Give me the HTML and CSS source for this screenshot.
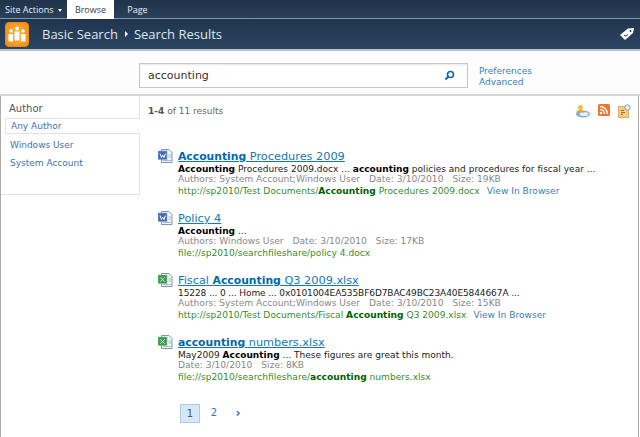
FILE: index.html
```html
<!DOCTYPE html>
<html lang="en">
<head>
<meta charset="utf-8">
<title>Search Results</title>
<link rel="stylesheet" href="styles.css">
</head>
<body>
<div class="ribbon">
  <div class="site-actions">Site Actions <span class="caret"></span></div>
  <div class="tab tab-active">Browse</div>
  <div class="tab">Page</div>
</div>
<div class="titlebar">
  <svg class="logo" width="24" height="25" viewBox="0 0 24 25"><defs><radialGradient id="lg" cx="0.5" cy="0.5" r="0.7"><stop offset="0" stop-color="#ffb43a"/><stop offset="1" stop-color="#f08a12"/></radialGradient></defs><rect x="0.500" y="0.500" width="23" height="24" rx="3.500" fill="url(#lg)" stroke="#e88a1a"/><circle cx="12" cy="6.500" r="2" fill="#fff"/><circle cx="6" cy="9" r="1.700" fill="#fff"/><circle cx="18" cy="9" r="1.700" fill="#fff"/><rect x="9.500" y="9.500" width="5" height="9" fill="#fff"/><rect x="3.500" y="12" width="4.500" height="7.500" fill="#fff"/><rect x="16" y="12" width="4.500" height="7.500" fill="#fff"/></svg>
  <div class="crumb">Basic Search</div>
  <span class="crumb-arrow"></span>
  <div class="crumb">Search Results</div>
  <svg class="tag" width="16" height="14" viewBox="0 0 16 14"><path d="M1 8 L9 1.500 L15 1 L14 6 L6 13 Z" fill="#fff"/><circle cx="11.500" cy="4" r="1" fill="#2a4059"/><path d="M5 8.500 Q7 10 9 7.500" stroke="#2a4059" fill="none"/></svg>
</div>
<div class="searchbar">
  <div class="searchbox">
    <span class="query">accounting</span>
    <svg width="11" height="11" viewBox="0 0 11 11"><circle cx="6.500" cy="4.500" r="3" fill="none" stroke="#1b5f9e" stroke-width="1.600"/><path d="M4.500 6.500 L1.500 9.500" stroke="#1b5f9e" stroke-width="2"/></svg>
  </div>
  <div class="search-links"><a>Preferences</a><a>Advanced</a></div>
</div>
<div class="main">
  <aside class="refine">
    <div class="refine-title">Author</div>
    <div class="refine-item refine-selected">Any Author</div>
    <div class="refine-item">Windows User</div>
    <div class="refine-item">System Account</div>
  </aside>
  <section class="content">
    <div class="topline">
      <div class="count"><b>1-4</b> of 11 results</div>
      <div class="actions">
        <svg width="15" height="14" viewBox="0 0 15 14"><ellipse cx="8" cy="10" rx="7" ry="3.500" fill="#7fa9dc"/><ellipse cx="9" cy="10" rx="4.500" ry="2" fill="#e6f0fb"/><circle cx="5.500" cy="3.500" r="2.500" fill="#e8c04a"/><path d="M0.500 8.500 Q5 3 10 8.500 Z" fill="#d9a93a"/></svg>
        <svg width="12" height="12" viewBox="0 0 12 12"><rect width="12" height="12" rx="1.500" fill="#f0742a"/><circle cx="3" cy="9" r="1.300" fill="#fff"/><path d="M2 5.500 A4.500 4.500 0 0 1 6.500 10 M2 2.500 A7.500 7.500 0 0 1 9.500 10" fill="none" stroke="#fff" stroke-width="1.400"/></svg>
        <svg width="13" height="14" viewBox="0 0 13 14"><rect x="0.500" y="2.500" width="10" height="11" fill="#f4cf83" stroke="#e0ad68"/><path d="M3 6.500 H6 M3 8.500 H7 M3 10.500 H5" stroke="#a8682a"/><circle cx="9.500" cy="3.500" r="2.700" fill="#e4eef8" stroke="#8a9bb0"/></svg>
      </div>
    </div>
    <article class="result">
      <svg class="doc" width="15" height="14" viewBox="0 0 15 14"><use href="#word"/></svg>
      <div>
        <a class="r-title"><b>Accounting</b> Procedures 2009</a>
        <div class="r-snippet"><b>Accounting</b> Procedures 2009.docx ... <b>accounting</b> policies and procedures for fiscal year ...</div>
        <div class="r-meta"><span>Authors: System Account;Windows User</span><span>Date: 3/10/2010</span><span>Size: 19KB</span></div>
        <div class="r-url">http://sp2010/Test Documents/<b>Accounting</b> Procedures 2009.docx<a class="view">View In Browser</a></div>
      </div>
    </article>
    <article class="result">
      <svg class="doc" width="15" height="14" viewBox="0 0 15 14"><use href="#word"/></svg>
      <div>
        <a class="r-title">Policy 4</a>
        <div class="r-snippet"><b>Accounting</b> ...</div>
        <div class="r-meta"><span>Authors: Windows User</span><span>Date: 3/10/2010</span><span>Size: 17KB</span></div>
        <div class="r-url">file://sp2010/searchfileshare/policy 4.docx</div>
      </div>
    </article>
    <article class="result">
      <svg class="doc" width="15" height="14" viewBox="0 0 15 14"><use href="#excel"/></svg>
      <div>
        <a class="r-title">Fiscal <b>Accounting</b> Q3 2009.xlsx</a>
        <div class="r-snippet r-snippet-tight">15228 ... 0 ... Home ... 0x0101004EA535BF6D7BAC49BC23A40E5844667A ...</div>
        <div class="r-meta"><span>Authors: System Account;Windows User</span><span>Date: 3/10/2010</span><span>Size: 15KB</span></div>
        <div class="r-url">http://sp2010/Test Documents/Fiscal <b>Accounting</b> Q3 2009.xlsx<a class="view">View In Browser</a></div>
      </div>
    </article>
    <article class="result">
      <svg class="doc" width="15" height="14" viewBox="0 0 15 14"><use href="#excel"/></svg>
      <div>
        <a class="r-title"><b>accounting</b> numbers.xlsx</a>
        <div class="r-snippet">May2009 <b>Accounting</b> ... These figures are great this month.</div>
        <div class="r-meta"><span>Date: 3/10/2010</span><span>Size: 8KB</span></div>
        <div class="r-url">file://sp2010/searchfileshare/<b>accounting</b> numbers.xlsx</div>
      </div>
    </article>
    <nav class="pager">
      <span class="page page-current">1</span>
      <span class="page">2</span>
      <span class="page next">›</span>
    </nav>
  </section>
</div>
<svg class="defs" width="0" height="0">
  <defs>
    <g id="word"><path d="M3.500 .5 H11 L14 3.500 V13.500 H3.500 Z" fill="#f2f5fa" stroke="#7f93b5"/><rect x="0" y="2" width="9" height="8.500" fill="#3f6cb5" stroke="#8fa8d0" stroke-width=".6"/><path d="M2 4.500 L3.500 8.500 L4.700 6 L6 8.500 L7.500 4.500" stroke="#fff" fill="none"/><path d="M10.500 6 H13 M10.500 8 H13 M5 11.500 H13" stroke="#a9b8d0"/></g>
    <g id="excel"><path d="M3.500 .5 H11 L14 3.500 V13.500 H3.500 Z" fill="#f2f6f4" stroke="#7f96a8"/><rect x="0" y="2" width="9" height="8.500" fill="#3a9c52" stroke="#8cc49c" stroke-width=".6"/><path d="M2.500 4.500 L6.500 8.500 M6.500 4.500 L2.500 8.500" stroke="#fff"/><path d="M10.500 6 H13 M10.500 8 H13 M5 11.500 H13" stroke="#a9bcc4"/></g>
  </defs>
</svg>
</body>
</html>
```
FILE: styles.css
```css
* { box-sizing: border-box; }
html, body { margin: 0; padding: 0; }
body {
  width: 640px;
  height: 437px;
  overflow: hidden;
  background: #fff;
  font-family: "DejaVu Sans", Verdana, sans-serif;
  font-size: 9px;
  color: #333;
  position: relative;
}
.defs { position: absolute; }
.ribbon {
  height: 19px;
  background: linear-gradient(#1f3349, #2a4059);
  border-bottom: 1px solid #7f97a8;
  display: flex;
  color: #e8edf2;
  font-family: "Open Sans", sans-serif;
  font-size: 9px;
  line-height: 19px;
}
.site-actions { width: 67px; padding-left: 5px; white-space: nowrap; }
.caret {
  display: inline-block;
  border: 2.5px solid transparent;
  border-top: 3px solid #fff;
  border-bottom: 0;
  margin-left: 2px;
  vertical-align: 1px;
}
.tab { width: 47px; text-align: center; }
.tab-active { background: #fff; color: #3b3b3b; height: 19px; }
.titlebar {
  height: 32px;
  background: linear-gradient(#203650, #2b4560);
  border-bottom: 2px solid #b8c4cc;
  display: flex;
  align-items: center;
  color: #dfe6ee;
  font-family: "Open Sans", sans-serif;
  font-size: 13px;
  padding-left: 5px;
}
.logo { margin-right: 13px; }
.crumb { white-space: nowrap; }
.crumb-arrow {
  border: 3px solid transparent;
  border-left: 3px solid #fff;
  border-right: 0;
  margin: 0 6px 0 7px;
}
.tag { margin-left: auto; margin-right: 5px; }
.searchbar {
  height: 45px;
  display: flex;
  align-items: flex-start;
  border-bottom: 2px solid #d6d6d6;
  padding: 12px 0 0 139px;
  background: #fdfdfd;
}
.searchbox {
  width: 329px;
  height: 25px;
  border: 1px solid #c4c8cc;
  box-shadow: inset 0 1px 2px #e8e8e8;
  background: #fff;
  display: flex;
  align-items: center;
  justify-content: space-between;
  padding: 0 12px 0 8px;
}
.query { font-size: 11px; color: #333; }
.search-links {
  margin: 3px 0 0 11px;
  display: flex;
  flex-direction: column;
  color: #3b80b8;
  line-height: 10.5px;
}
.main { display: flex; height: 341px; border-left: 1px solid #aaa; }
.refine {
  width: 139px;
  height: 99px;
  border: 1px solid #e2e2e2;
  border-width: 0 1px 1px 0;
  color: #3b73af;
}
.refine-title { color: #555; font-size: 10px; height: 22px; padding: 6px 0 0 8px; line-height: 14px; }
.refine-item { height: 18px; line-height: 16px; padding-left: 9px; }
.refine-selected {
  height: 16px;
  margin: 0 -1px 3px 4px;
  padding-left: 5px;
  line-height: 14px;
  border: 1px solid #e2e2e2;
  border-right: 0;
  background: #fff;
  position: relative;
}
.content { flex: 1; padding-left: 8px; border-right: 1px solid #aaa; margin-right: 1px; }
.topline { display: flex; justify-content: space-between; height: 48px; padding: 8px 7px 0 0; color: #666; }
.count { margin-top: 2px; }
.count b { color: #555; }
.actions { display: flex; gap: 8px; align-items: flex-start; }
.result { display: flex; gap: 5px; height: 62px; padding-left: 10px; }
.doc { margin-top: 5px; flex: none; }
.r-title { display: block; margin-top: 6px; font-size: 11.3px; line-height: 14px; color: #0f78c0; text-decoration: underline; }
.r-title b { font-size: 10.8px; color: #0068b0; }
.r-snippet { line-height: 11px; color: #222; white-space: nowrap; letter-spacing: .02px; }
.r-snippet b { color: #000; }
.r-snippet-tight { letter-spacing: -.1px; }
.r-meta { margin-top: -1px; line-height: 11px; font-size: 9.1px; color: #888; display: flex; gap: 9px; white-space: nowrap; }
.r-url { line-height: 12px; font-size: 9.1px; color: #388a2e; white-space: nowrap; }
.r-url b { color: #006100; }
.view { margin-left: 7px; color: #3b80b8; }
.pager { display: flex; align-items: center; margin: 11px 0 0 32px; height: 20px; color: #3b73af; font-size: 10px; }
.page { width: 20px; height: 19px; line-height: 18px; text-align: center; margin-right: 4px; }
.page-current { background: #d4e8f8; border: 1px solid #a9cde8; color: #555; }
.next { font-weight: bold; color: #1b6fb5; font-size: 12px; }
```
